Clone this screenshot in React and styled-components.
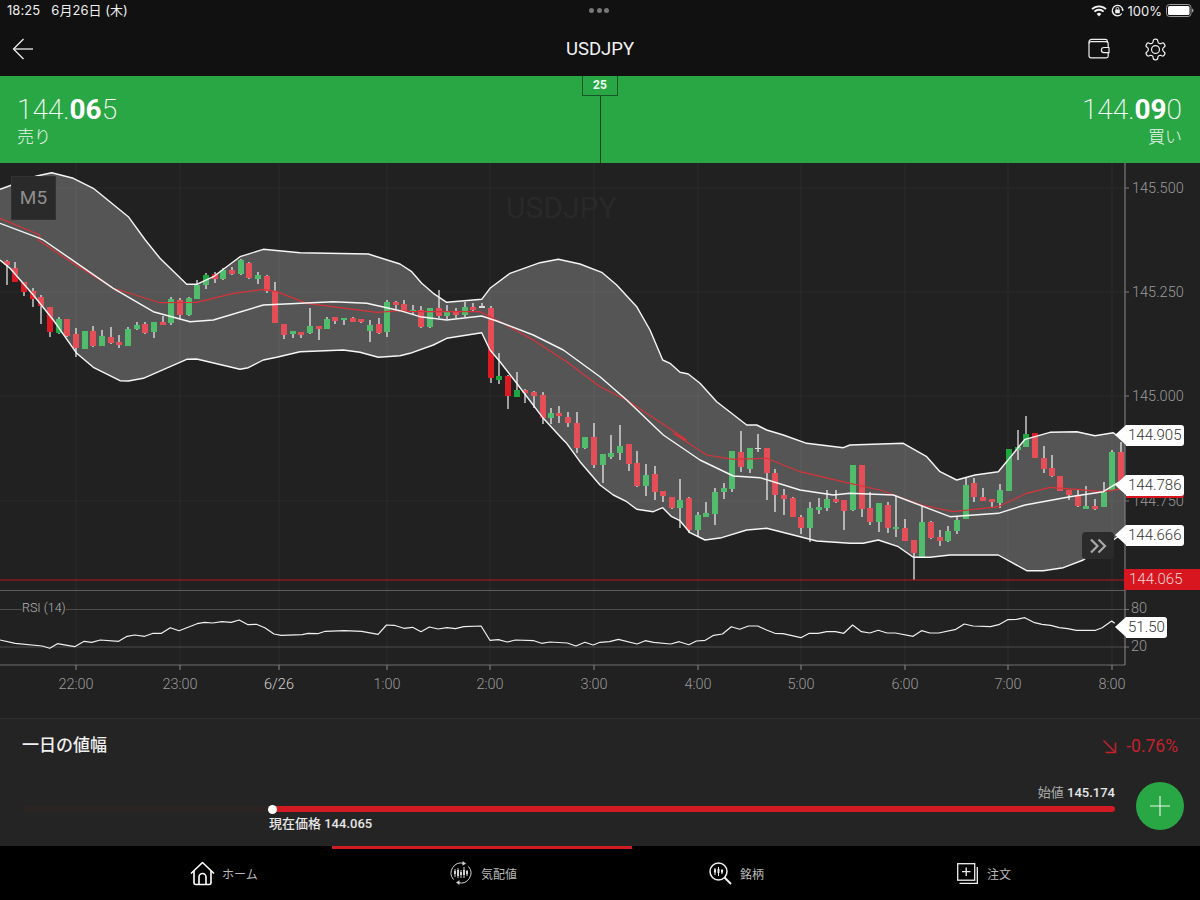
import React from "react";
import styled, { createGlobalStyle } from "styled-components";

const Global = createGlobalStyle`
  html, body { margin: 0; padding: 0; background: #242424; }
  body { font-family: Roboto, "Noto Sans CJK JP", sans-serif; }
  * { box-sizing: border-box; }
`;
const CJK = `Roboto, "Noto Sans CJK JP", sans-serif`;

const Page = styled.div`position: relative; width: 1200px; height: 900px; overflow: hidden; background: #242424; color: #fff;`;
const TopBar = styled.header`position: absolute; left: 0; top: 0; width: 1200px; height: 76px; background: #111112;`;
const StatusLeft = styled.div`position: absolute; left: 7px; top: 2px; font: 400 13px/16px Inter, "Noto Sans CJK JP", sans-serif; color: #eee; white-space: pre; letter-spacing: .05px;`;
const StatusRight = styled.div`position: absolute; right: 6px; top: 2px; height: 17px; display: flex; align-items: center; gap: 4px; font: 400 13px/16px Inter, sans-serif; color: #eee;`;
const Dots = styled.div`position: absolute; left: 589px; top: 8px; display: flex; gap: 2.5px;`;
const Dot = styled.i`display: block; width: 5px; height: 5px; border-radius: 50%; background: #777;`;
const Title = styled.h1`position: absolute; left: 0; top: 37px; width: 1200px; margin: 0; text-align: center; font: 400 18.5px/24px Roboto, sans-serif; color: #f2f2f2;`;
const IconSlot = styled.div`position: absolute; left: ${p => p.$x}px; top: ${p => p.$y}px; line-height: 0;`;

const PriceBar = styled.section`position: absolute; left: 0; top: 76px; width: 1200px; height: 87px; background: #2aa745;`;
const Quote = styled.div`position: absolute; top: 17px; ${p => p.$right ? "right: 18px; text-align: right;" : "left: 17px; text-align: left;"}`;
const Price = styled.div`font: 200 28px/34px Roboto, sans-serif; color: #fff; b { font-weight: 700; }`;
const Side = styled.div`font: 300 17px/20px ${CJK}; color: #e8f5ea; margin-top: 0;`;
const SpreadTag = styled.div`position: absolute; left: 582px; top: 0; width: 36px; height: 20px; border: 1px solid #15552a; border-top: 0; text-align: center; font: 700 12px/18px Roboto, sans-serif; color: #eafff0; background: #2aa745;`;
const SpreadLine = styled.div`position: absolute; left: 599.5px; top: 20px; width: 1px; height: 67px; background: #15451f;`;

const Chart = styled.section`position: absolute; left: 0; top: 163px; width: 1200px; height: 555px; background: #212121;`;
const ChartSvg = styled.svg`position: absolute; left: 0; top: 0; display: block;`;
const Interval = styled.div`position: absolute; left: 11px; top: 13px; width: 45px; height: 44px; background: #2a2a2a; border: 1px solid #333; text-align: center; font: 400 19px/42px Roboto, sans-serif; color: #8f8f8f;`;
const Watermark = styled.div`position: absolute; left: 506px; top: 28px; font: 400 30px/34px Roboto, sans-serif; color: #292929;`;
const AxisLabel = styled.span`position: absolute; left: ${p => p.$x}px; top: ${p => p.$y - 163 - 8}px; font: 300 14.5px/18px Roboto, sans-serif; color: #9a9a9a;`;
const TimeLabel = styled.span`position: absolute; left: ${p => p.$x - 30}px; top: ${684 - 163 - 8}px; width: 60px; text-align: center; font: 300 14.5px/18px Roboto, sans-serif; color: ${p => p.$strong ? "#d4d4d4" : "#9a9a9a"};`;
const RsiName = styled.span`position: absolute; left: 22px; top: ${607 - 163 - 7}px; font: 300 12.5px/16px Roboto, sans-serif; color: #b4b4b4; background: #212121;`;
const Tag = styled.div`
  position: absolute; left: ${p => p.$x}px; top: ${p => p.$y - 163}px; height: 21px; padding: 0 2px 0 2px;
  background: #fff; border-radius: 0 3px 3px 0; color: #333; font: 300 15px/21px Roboto, sans-serif;
  ${p => p.$under ? "box-shadow: 0 2px 0 #d8141f;" : ""}
  &::before { content: ""; position: absolute; left: -11px; top: 0; border-style: solid; border-width: 10.5px 11px 10.5px 0; border-color: transparent #fff transparent transparent; }
`;
const BidTag = styled.div`position: absolute; left: 1124px; top: ${569 - 163}px; width: 76px; height: 21px; background: #d8161f; color: #f3d6d8; padding-left: 5px; font: 300 15px/21px Roboto, sans-serif;`;
const MoreBtn = styled.div`position: absolute; left: 1082px; top: ${532 - 163}px; width: 32px; height: 27px; border-radius: 4px; background: #2b2b2b; display: flex; align-items: center; justify-content: center;`;

const Range = styled.section`position: absolute; left: 0; top: 718px; width: 1200px; height: 128px; background: #242424; border-top: 1px solid #2e2e2e;`;
const RangeTitle = styled.h2`position: absolute; left: 22px; top: 14px; margin: 0; font: 500 17px/24px ${CJK}; color: #f0f0f0;`;
const Change = styled.div`position: absolute; right: 22px; top: 15px; display: flex; align-items: center; gap: 9px; font: 400 17.5px/24px Roboto, sans-serif; color: #c3222c;`;
const Track = styled.div`position: absolute; left: 22px; top: 87px; width: 1093px; height: 6px; border-radius: 3px; background: #2c2323;`;
const Fill = styled.div`position: absolute; left: 250px; top: 0; right: 0; height: 6px; border-radius: 3px; background: #d21a22;`;
const Knob = styled.div`position: absolute; left: 268px; top: 85.5px; width: 9px; height: 9px; border-radius: 50%; background: #fff;`;
const Note = styled.div`position: absolute; top: ${p => p.$y}px; ${p => p.$right ? `right: ${p.$right}px;` : `left: ${p.$left}px;`} font: 500 13px/16px ${CJK}; color: #e6e6e6; white-space: nowrap; span { color: #aaa; font-weight: 400; }`;
const Fab = styled.div`position: absolute; left: 1136px; top: 63px; width: 48px; height: 48px; border-radius: 50%; background: #2aa745; display: flex; align-items: center; justify-content: center;`;

const Nav = styled.nav`position: absolute; left: 0; top: 846px; width: 1200px; height: 54px; background: #000;`;
const Active = styled.div`position: absolute; left: 332px; top: 0; width: 300px; height: 3px; background: #d21a22;`;
const NavItem = styled.div`position: absolute; left: ${p => p.$x}px; top: 0; height: 54px; display: flex; align-items: center; gap: ${p => p.$gap}px; font: 400 12px/16px ${CJK}; color: #b8b8b8;`;
const NavLabel = styled.span`position: relative; top: 2px;`;

/* ---- chart data, absolute page coordinates ---- */
const C = [
 [7,260,285,261,265,0],[15,262,282,268,282,0],[24,282,296,282,292,0],[33,288,307,291,299,0],[41,295,324,297,306,0],[50,307,337,307,332,0],
 [59,317,334,319,333,1],[67,319,337,319,336,0],[76,328,357,334,348,0],[85,331,349,331,349,1],[93,326,347,331,346,0],[102,330,346,336,346,1],
 [111,327,344,337,343,0],[119,335,348,342,345,0],[128,327,346,329,346,1],[137,322,330,325,329,1],[145,322,334,324,333,0],[154,322,338,322,332,1],
 [163,316,325,322,325,0],[171,297,325,299,323,1],[180,298,319,300,315,0],[189,297,316,298,315,1],[197,280,299,285,299,1],[206,273,289,275,285,1],
 [215,272,283,274,279,0],[223,268,280,270,279,1],[232,267,275,270,274,0],[241,259,275,260,274,1],[249,262,279,263,278,0],[258,272,284,275,279,1],
 [267,275,293,276,291,0],[275,282,323,291,323,0],[284,324,339,324,335,0],[293,331,338,331,334,1],[301,332,338,332,335,0],[310,308,334,326,333,1],
 [319,326,340,326,329,0],[327,317,329,319,329,1],[335,317,324,317,321,0],[344,318,325,318,320,1],[353,317,322,318,322,0],[361,319,323,319,322,0],
 [370,320,342,325,331,1],[379,318,334,324,333,0],[387,300,337,302,332,1],[396,301,309,302,305,0],[404,300,312,304,311,0],[413,305,314,310,312,1],
 [421,306,328,310,327,0],[430,308,328,308,327,1],[439,290,318,308,316,0],[447,305,319,311,316,1],[456,308,318,311,315,0],[465,302,317,307,315,1],
 [473,303,311,307,310,0],[482,303,308,306,308,2],[491,306,383,308,378,0],[499,353,384,376,380,1],[508,375,409,376,396,0],[517,372,397,390,397,1],
 [525,389,403,390,393,0],[534,391,408,392,396,0],[543,392,424,395,418,0],[551,408,424,413,418,1],[559,406,423,413,416,0],[568,412,427,417,423,0],
 [577,412,453,423,448,0],[585,437,449,437,448,1],[594,423,468,437,465,0],[603,454,483,454,465,1],[611,435,459,453,457,1],[620,425,460,446,453,1],
 [629,444,471,444,464,0],[637,451,487,463,486,0],[646,464,496,475,486,1],[655,466,500,474,492,0],[663,491,502,491,496,0],[672,497,509,497,508,0],
 [680,479,528,500,508,1],[689,497,533,498,530,0],[698,512,536,515,530,1],[706,502,517,513,517,1],[715,488,525,492,514,1],[724,483,499,488,492,1],
 [732,451,492,451,489,1],[741,431,472,452,467,0],[750,448,473,448,469,1],[758,434,452,448,449,2],[767,448,500,448,473,0],[775,469,512,473,495,0],
 [784,489,515,495,499,0],[793,497,517,498,517,0],[801,515,534,517,528,0],[810,502,542,508,528,1],[819,498,514,507,510,1],[827,490,511,499,508,1],
 [836,490,503,499,502,0],[844,500,530,500,511,0],[853,465,511,465,510,1],[862,465,517,465,509,0],[870,492,525,508,522,0],[879,503,532,503,522,1],
 [888,502,533,505,528,0],[896,496,537,527,529,1],[905,519,541,528,541,0],[914,540,580,540,553,0],[922,505,557,522,557,1],[931,521,539,522,538,0],
 [940,530,546,537,541,0],[948,526,542,531,541,1],[957,517,534,520,531,1],[966,478,519,485,519,1],[974,478,502,483,497,0],[983,488,501,497,501,0],
 [992,499,508,499,502,0],[1000,484,508,490,503,1],[1009,449,491,449,491,1],[1018,430,460,447,450,1],[1026,416,447,434,447,1],[1035,433,458,433,458,0],
 [1044,446,473,458,469,0],[1052,455,477,468,476,0],[1060,476,491,476,491,0],[1069,490,500,490,495,0],[1078,490,507,495,506,0],[1086,486,509,506,509,1],
 [1095,499,510,506,509,0],[1104,482,507,492,507,1],[1112,450,491,452,490,1],[1121,442,489,452,489,0],
];

const z = (ox, oy, sx, pts) => pts.map(([x, y]) => [ox + x / sx, oy + y / 3]);
const upper = [
 ...z(0,0,3,[[0,568],[110,528],[155,518],[220,535],[280,565],[385,650],[436,720]]),
 ...z(0,240,3,[[480,55],[560,133],[590,133],[640,110],[680,80],[720,50],[790,28],[900,38],[1105,42],[1200,72]]),
 ...z(400,240,3,[[35,95],[65,130],[100,160],[140,187],[245,178],[270,145],[330,100],[420,68],[475,58],[540,72],[605,97],[650,135],[710,200],[750,270],[788,360],[810,370],[840,397],[865,402],[900,430],[950,485],[1040,555],[1070,555],[1100,570]]),
 ...z(500,400,3,[[850,105],[920,130],[1030,143]]),
 ...z(850,400,3,[[0,135],[160,130],[230,170],[270,215],[320,240],[375,225],[445,215],[525,118],[600,97],[680,95],[735,107],[790,98],[825,125]]),
];
const lower = [
 ...z(0,240,3,[[0,60],[30,85],[100,165],[160,240],[230,340],[280,382],[360,422],[385,423],[430,415],[560,358],[590,357],[720,388],[745,383],[790,360],[830,352],[900,335],[1030,330],[1080,337],[1135,352],[1200,347]]),
 ...z(400,240,3,[[30,340],[100,315],[140,295],[245,278],[270,330],[300,365],[350,430],[430,535],[490,600]]),
 ...z(500,400,3,[[200,130],[240,185],[300,255],[340,285],[380,305],[410,328],[460,335],[488,323],[515,350],[540,362],[570,398],[615,420],[665,413],[740,390],[800,385],[880,405],[950,423],[1050,430]]),
 ...z(850,400,3,[[40,430],[85,420],[145,440],[190,472],[240,472],[300,465],[445,465],[530,512],[580,512],[640,503],[700,480],[790,420],[825,395]]),
];
const mid = [
 ...z(0,0,3,[[0,670],[120,715]]),
 ...z(0,240,3,[[130,0],[340,145],[460,215],[570,245],[640,240],[790,195],[1000,185],[1100,190],[1200,212]]),
 ...z(400,240,3,[[60,230],[140,240],[245,228],[290,243],[400,285],[490,330],[600,410],[680,480],[790,585]]),
 ...z(500,400,3,[[490,105],[600,180],[700,228],[780,233],[900,270],[1000,285]]),
 ...z(850,400,3,[[0,280],[130,285],[300,350],[445,340],[525,315],[660,290],[760,275],[800,250],[825,240]]),
];
const red = [
 ...z(0,0,3,[[0,655],[120,705]]),
 ...z(0,240,3,[[115,0],[220,70],[340,145],[480,188],[590,187],[700,160],[790,148],[830,155],[920,190],[1130,217],[1200,212]]),
 ...z(400,240,3,[[40,215],[240,215],[300,245],[400,300],[500,365],[600,440],[680,480],[860,600]]),
 ...z(500,400,3,[[520,100],[620,165],[700,178],[800,175],[900,215],[1050,250]]),
 ...z(850,400,3,[[90,270],[215,315],[310,335],[445,320],[530,280],[600,262],[680,268],[760,275],[825,265]]),
];
const rsi = [
 ...z(0,590,2.613,[[0,150],[40,160],[110,168],[130,175],[150,161],[195,170],[220,154],[240,157],[262,150],[310,154],[332,139],[352,135],[378,139],[400,130],[422,130],[445,113],[468,122],[515,101],[535,97],[555,99],[580,95],[604,97],[625,90],[648,104],[670,103],[692,113],[716,132],[735,136],[790,134],[805,130],[830,131],[850,124],[900,122],[945,124],[988,133],[1010,105],[1030,106],[1055,115],[1078,112],[1100,125],[1122,111],[1145,117],[1168,113],[1190,116],[1212,110],[1257,108],[1280,151],[1302,149],[1325,156],[1347,150],[1395,152],[1415,160],[1437,156],[1482,159],[1505,168],[1528,157],[1550,165]]),
 ...z(600,590,2.613,[[0,157],[25,155],[48,148],[97,162],[118,152],[140,157],[185,162],[207,155],[232,164],[252,153],[275,151],[297,136],[320,132],[343,110],[365,118],[388,108],[412,108],[435,120],[457,130],[478,131],[525,143],[547,130],[570,130],[592,125],[615,125],[637,130],[660,105],[683,125],[705,129],[727,121],[750,129],[772,129],[818,139],[840,122],[862,129],[885,129],[930,118],[952,102],[975,108],[1020,110],[1042,104],[1065,89],[1088,88],[1110,83],[1133,97],[1155,103],[1178,106],[1200,113],[1222,116],[1245,121],[1295,121],[1312,113],[1337,93],[1345,100]]),
];
const P = a => a.map(([x, y]) => `${x.toFixed(1)},${y.toFixed(1)}`).join(" ");

const VX = [76,180,279,387,490,594,698,801,905,1008,1112];
const HY = [188,292,396,501];
const TIMES = [["22:00",76],["23:00",180],["6/26",279,true],["1:00",387],["2:00",490],["3:00",594],["4:00",698],["5:00",801],["6:00",905],["7:00",1008],["8:00",1112]];
const COL = ["#dc1a24", "#1ca83e", "#cfcfcf"];

function ChartDrawing() {
  return (
    <ChartSvg width="1200" height="555" viewBox="0 163 1200 555">
      <defs><clipPath id="plot"><rect x="0" y="163" width="1125" height="427" /></clipPath></defs>
      {VX.map(x => <line key={x} x1={x} x2={x} y1="163" y2="665" stroke="#2c2c2c" strokeWidth="1" />)}
      {HY.map(y => <line key={y} x1="0" x2="1125" y1={y} y2={y} stroke="#2a2a2a" strokeWidth="1" />)}
      <g clipPath="url(#plot)">
        {C.map(([x, wt, wb, bt, bb, c]) => (
          <g key={x}>
            <line x1={x} x2={x} y1={wt} y2={wb} stroke="#e4e4e4" strokeWidth="1.3" />
            <rect x={x - 3} y={bt} width="6" height={Math.max(bb - bt, 1)} fill={COL[c]} />
          </g>
        ))}
        <polygon points={P([...upper, ...[...lower].reverse()])} fill="rgba(255,255,255,0.234)" />
        <polyline points={P(red)} fill="none" stroke="#d8333b" strokeWidth="1.2" />
        <polyline points={P(upper)} fill="none" stroke="#f6f6f6" strokeWidth="1.4" strokeLinejoin="round" />
        <polyline points={P(lower)} fill="none" stroke="#f6f6f6" strokeWidth="1.4" strokeLinejoin="round" />
        <polyline points={P(mid)} fill="none" stroke="#f6f6f6" strokeWidth="1.4" strokeLinejoin="round" />
      </g>
      <line x1="0" x2="1125" y1="580" y2="580" stroke="#b3161e" strokeWidth="1.2" />
      <line x1="0" x2="1125" y1="590.5" y2="590.5" stroke="#5c5c5c" strokeWidth="1.2" />
      <line x1="0" x2="1125" y1="609.5" y2="609.5" stroke="#4c4c4c" strokeWidth="1" />
      <line x1="0" x2="1125" y1="647" y2="647" stroke="#4c4c4c" strokeWidth="1" />
      <line x1="0" x2="1125" y1="665" y2="665" stroke="#6e6e6e" strokeWidth="1.2" />
      <line x1="1125" x2="1125" y1="163" y2="665" stroke="#7a7a7a" strokeWidth="1.2" />
      {HY.map(y => <line key={y} x1="1125" x2="1129" y1={y} y2={y} stroke="#7a7a7a" />)}
      {[609.5, 647].map(y => <line key={y} x1="1125" x2="1129" y1={y} y2={y} stroke="#7a7a7a" />)}
      {VX.map(x => <line key={x} x1={x} x2={x} y1="665" y2="670" stroke="#8a8a8a" />)}
      <polyline points={P(rsi)} fill="none" stroke="#f0f0f0" strokeWidth="1.2" strokeLinejoin="round" />
    </ChartSvg>
  );
}

export default function App() {
  return (
    <Page>
      <Global />
      <TopBar>
        <StatusLeft>18:25   6月26日 (木)</StatusLeft>
        <Dots><Dot /><Dot /><Dot /></Dots>
        <StatusRight>
          <svg width="16" height="12" viewBox="0 0 16 12" fill="none" stroke="#f2f2f2" strokeLinecap="butt">
            <path d="M1 4.2a10 10 0 0 1 14 0" strokeWidth="1.8" />
            <path d="M3.4 6.6a6.6 6.6 0 0 1 9.2 0" strokeWidth="1.8" />
            <path d="M8 11.5 5.7 9a3.2 3.2 0 0 1 4.6 0z" fill="#f2f2f2" stroke="none" />
          </svg>
          <svg width="13" height="13" viewBox="0 0 13 13" fill="none" stroke="#f2f2f2">
            <path d="M10.8 9.5A5.2 5.2 0 1 1 11.7 6.5" strokeWidth="1.3" />
            <path d="M10.4 5.6 11.8 7.2 13 5.6z" fill="#f2f2f2" stroke="none" />
            <rect x="4.2" y="5.6" width="4.6" height="3.6" rx=".5" fill="#f2f2f2" stroke="none" />
            <path d="M5.2 5.6V4.6a1.3 1.3 0 0 1 2.6 0v1" strokeWidth=".9" />
          </svg>
          <span>100%</span>
          <svg width="28" height="13" viewBox="0 0 28 13">
            <rect x=".5" y=".5" width="24.5" height="12" rx="3" fill="none" stroke="#999" />
            <rect x="2" y="2" width="21.5" height="9" rx="1.6" fill="#fff" />
            <path d="M26 4.5c1 .3 1.5 1 1.5 2s-.5 1.7-1.5 2z" fill="#999" />
          </svg>
        </StatusRight>
        <IconSlot $x={12} $y={38}>
          <svg width="22" height="22" viewBox="0 0 22 22" fill="none" stroke="#eee" strokeWidth="1.3">
            <path d="M21 11H2" /><path d="M11.5 1 1.5 11l10 10" />
          </svg>
        </IconSlot>
        <Title>USDJPY</Title>
        <IconSlot $x={1088} $y={38}>
          <svg width="22" height="21" viewBox="0 0 22 21" fill="none" stroke="#eee" strokeWidth="1.2" strokeLinejoin="round">
            <path d="M1 5.5V4a2.6 2.6 0 0 1 2.6-2.600H17.500a1.800 1.800 0 0 1 1.800 1.800V5" />
            <path d="M1 5.500a2 2 0 0 1 2-1.800h15.500a1.700 1.700 0 0 1 1.700 1.700V18a1.800 1.800 0 0 1-1.800 1.800H3a2 2 0 0 1-2-2z" />
            <path d="M21 9.500h-5a2.200 2.200 0 0 0 0 5.200h5z" fill="#111112" />
          </svg>
        </IconSlot>
        <IconSlot $x={1142.500} $y={36.500}>
          <svg width="25" height="25" viewBox="0 0 24 24" fill="none" stroke="#eee" strokeWidth="1.150" strokeLinejoin="round">
            <path d="M12.220 2h-.440a2 2 0 0 0-2 2v.180a2 2 0 0 1-1 1.730l-.430.250a2 2 0 0 1-2 0l-.150-.080a2 2 0 0 0-2.730.730l-.220.380a2 2 0 0 0 .730 2.730l.150.100a2 2 0 0 1 1 1.720v.510a2 2 0 0 1-1 1.740l-.150.090a2 2 0 0 0-.730 2.730l.220.380a2 2 0 0 0 2.730.730l.150-.080a2 2 0 0 1 2 0l.430.250a2 2 0 0 1 1 1.730V20a2 2 0 0 0 2 2h.440a2 2 0 0 0 2-2v-.180a2 2 0 0 1 1-1.730l.430-.250a2 2 0 0 1 2 0l.150.080a2 2 0 0 0 2.730-.730l.220-.390a2 2 0 0 0-.730-2.730l-.150-.080a2 2 0 0 1-1-1.740v-.500a2 2 0 0 1 1-1.740l.150-.090a2 2 0 0 0 .730-2.730l-.220-.380a2 2 0 0 0-2.730-.730l-.150.080a2 2 0 0 1-2 0l-.430-.250a2 2 0 0 1-1-1.730V4a2 2 0 0 0-2-2z" />
            <circle cx="12" cy="12" r="3.800" />
          </svg>
        </IconSlot>
      </TopBar>

      <PriceBar>
        <Quote>
          <Price>144.<b>06</b>5</Price>
          <Side>売り</Side>
        </Quote>
        <SpreadTag>25</SpreadTag>
        <SpreadLine />
        <Quote $right>
          <Price>144.<b>09</b>0</Price>
          <Side>買い</Side>
        </Quote>
      </PriceBar>

      <Chart>
        <Watermark>USDJPY</Watermark>
        <ChartDrawing />
        <Interval>M5</Interval>
        {[["145.500",188],["145.250",292],["145.000",396],["144.750",501]].map(([t, y]) => <AxisLabel key={t} $x={1132} $y={y}>{t}</AxisLabel>)}
        <AxisLabel $x={1131} $y={608}>80</AxisLabel>
        <AxisLabel $x={1131} $y={646}>20</AxisLabel>
        {TIMES.map(([t, x, s]) => <TimeLabel key={t} $x={x} $strong={s}>{t}</TimeLabel>)}
        <RsiName>RSI (14)</RsiName>
        <MoreBtn>
          <svg width="18" height="16" viewBox="0 0 18 16" fill="none" stroke="#a8a8a8" strokeWidth="2.200">
            <path d="M2 1.500 8.500 8 2 14.500" /><path d="M9.500 1.500 16 8l-6.500 6.500" />
          </svg>
        </MoreBtn>
        <Tag $x={1126} $y={425}>144.905</Tag>
        <Tag $x={1126} $y={475} $under>144.786</Tag>
        <Tag $x={1126} $y={525}>144.666</Tag>
        <BidTag>144.065</BidTag>
        <Tag $x={1126} $y={617}>51.50</Tag>
      </Chart>

      <Range>
        <RangeTitle>一日の値幅</RangeTitle>
        <Change>
          <svg width="15" height="15" viewBox="0 0 15 15" fill="none" stroke="#c3222c" strokeWidth="1.500">
            <path d="M1.500 1.500 13 13" /><path d="M13.500 3.500V13.500H3.500" />
          </svg>
          -0.76%
        </Change>
        <Note $right={85} $y={66}><span>始値</span> 145.174</Note>
        <Track><Fill /></Track>
        <Knob />
        <Note $left={269} $y={97}>現在価格 144.065</Note>
        <Fab>
          <svg width="22" height="22" viewBox="0 0 22 22" stroke="#e9f7ec" strokeWidth="1.100">
            <path d="M11 1v20M1 11h20" />
          </svg>
        </Fab>
      </Range>

      <Nav>
        <Active />
        <NavItem $x={190} $gap={7}>
          <svg width="25" height="25" viewBox="0 0 25 25" fill="none" stroke="#fff" strokeWidth="1.600" strokeLinejoin="round">
            <path d="M1 12.500 12.500 1.500 24 12.500" /><path d="M4 10v11.500a2 2 0 0 0 2 2h13a2 2 0 0 0 2-2V10" /><path d="M9 23.500V16a3.500 3.500 0 0 1 7 0v7.500" />
          </svg>
          <NavLabel>ホーム</NavLabel>
        </NavItem>
        <NavItem $x={450} $gap={9}>
          <svg width="22" height="24" viewBox="0 0 22 24" fill="none" stroke="#d0d0d0" strokeWidth="1">
            <path d="M13.500 2.300A10 10 0 0 0 3.500 18.500" /><path d="M8.500 21.700A10 10 0 0 0 18.500 5.500" />
            <path d="M12.500 0l3.500 2.500-3.500 2.300zM9.500 19.200 6 21.500 9.500 24z" fill="#d0d0d0" stroke="none" />
            <path d="M5 8v8M8 7v10M11 9v8M14 6v11M17 9v6" />
            <path d="M5 10v3M8 9v6M11 11v3M14 9v5M17 10v3" strokeWidth="2" />
          </svg>
          <NavLabel>気配値</NavLabel>
        </NavItem>
        <NavItem $x={709} $gap={8}>
          <svg width="23" height="23" viewBox="0 0 23 23" fill="none" stroke="#f0f0f0">
            <circle cx="9.500" cy="9.500" r="8.500" strokeWidth="1.500" />
            <path d="M15.500 15.500 22 22" strokeWidth="2" />
            <path d="M6 6v7M9.500 5v9M13 7v5" strokeWidth="1" />
            <path d="M6 7.500v3M9.500 7v4M13 8v2.500" strokeWidth="2" />
          </svg>
          <NavLabel>銘柄</NavLabel>
        </NavItem>
        <NavItem $x={957} $gap={9}>
          <svg width="21" height="21" viewBox="0 0 21 21" fill="none" stroke="#f0f0f0" strokeWidth="1.300">
            <rect x=".7" y=".7" width="17" height="16.500" />
            <path d="M9.200 4.500v8.500M5 8.700h8.500" />
            <path d="M20.300 4v16.300H2.500" />
          </svg>
          <NavLabel>注文</NavLabel>
        </NavItem>
      </Nav>
    </Page>
  );
}
